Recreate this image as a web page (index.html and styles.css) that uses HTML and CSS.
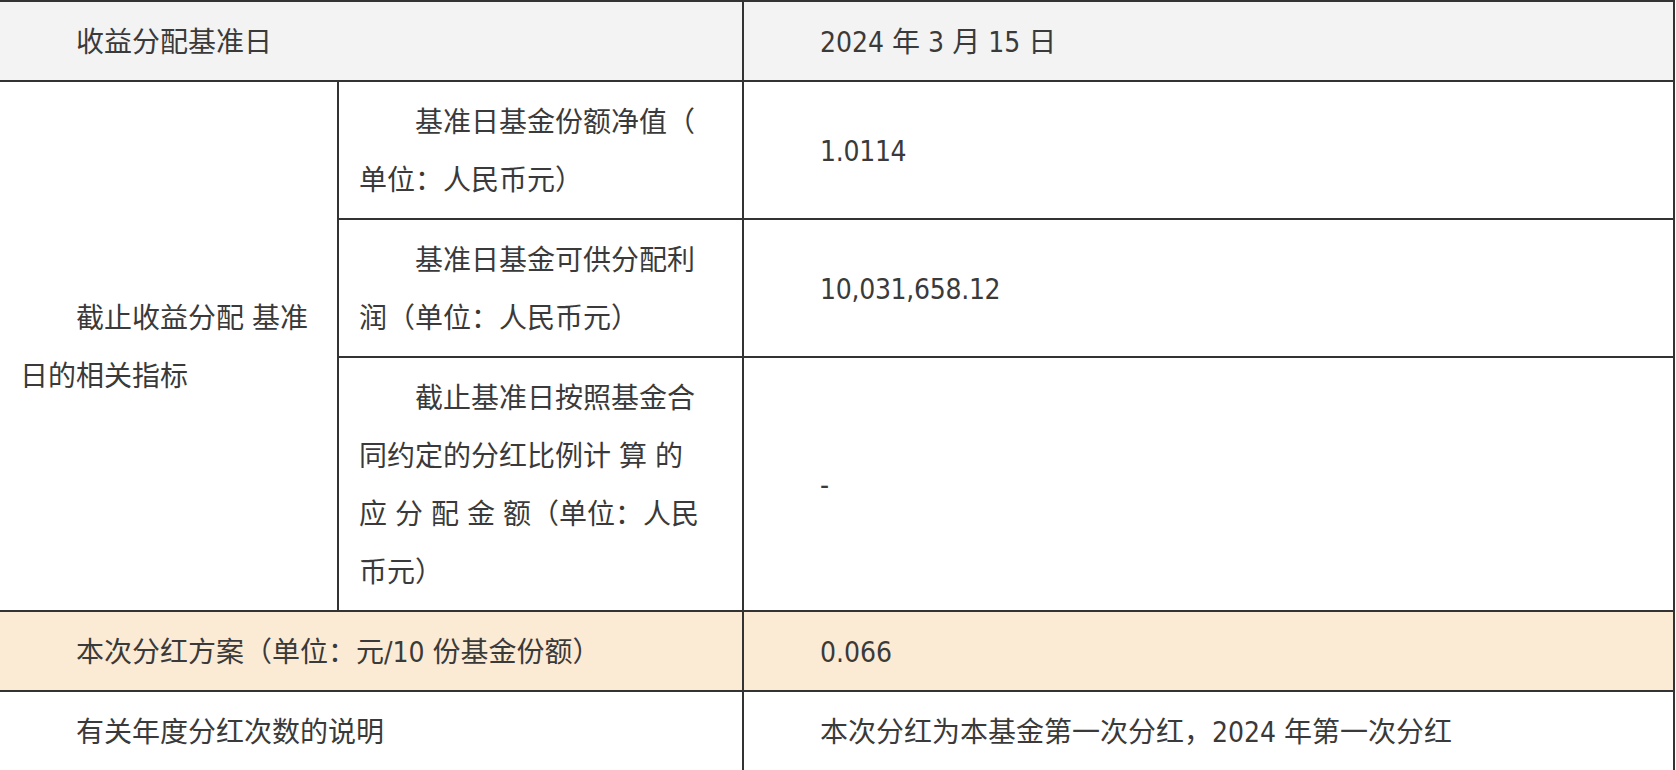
FILE: index.html
```html
<!DOCTYPE html>
<html lang="zh-CN">
<head>
<meta charset="utf-8">
<title>收益分配</title>
<link rel="stylesheet" href="styles.css">
</head>
<body>
<table class="dist">
  <colgroup>
    <col class="c1">
    <col class="c2">
    <col class="c3">
  </colgroup>
  <tr class="head">
    <td colspan="2">收益分配基准日</td>
    <td>2024 年 3 月 15 日</td>
  </tr>
  <tr>
    <td rowspan="3" class="first">截止收益分配 基准<br>日的相关指标</td>
    <td>基准日基金份额净值（<br>单位：人民币元）</td>
    <td class="val">1.0114</td>
  </tr>
  <tr>
    <td>基准日基金可供分配利<br>润（单位：人民币元）</td>
    <td class="val">10,031,658.12</td>
  </tr>
  <tr>
    <td>截止基准日按照基金合<br>同约定的分红比例计 算 的<br>应 分 配 金 额（单位：人民<br>币元）</td>
    <td class="val">-</td>
  </tr>
  <tr class="tan">
    <td colspan="2">本次分红方案（单位：元/10 份基金份额）</td>
    <td>0.066</td>
  </tr>
  <tr>
    <td colspan="2">有关年度分红次数的说明</td>
    <td>本次分红为本基金第一次分红，2024 年第一次分红</td>
  </tr>
</table>
</body>
</html>
```

FILE: styles.css
```css
html, body {
  margin: 0;
  padding: 0;
  background: #ffffff;
}

body {
  font-family: "DejaVu Sans Condensed", "Noto Sans CJK SC", sans-serif;
  font-size: 28px;
  color: #3a3a3a;
}

.dist {
  border-collapse: collapse;
  table-layout: fixed;
  width: 1675px;
  border-top: 2px solid #333333;
  border-right: 2px solid #333333;
}

.c1 { width: 338px; }
.c2 { width: 405px; }

.dist td {
  border: 2px solid #333333;
  padding: 12px 20px 8px 20px;
  line-height: 58px;
  text-indent: 2em;
  vertical-align: middle;
  text-align: left;
  white-space: nowrap;
}

.dist tr > td:first-child {
  border-left: none;
}

.val {
  letter-spacing: -0.3px;
}

.head td {
  background: #f3f3f3;
}

.tan td {
  background: #fcebd4;
}
```
